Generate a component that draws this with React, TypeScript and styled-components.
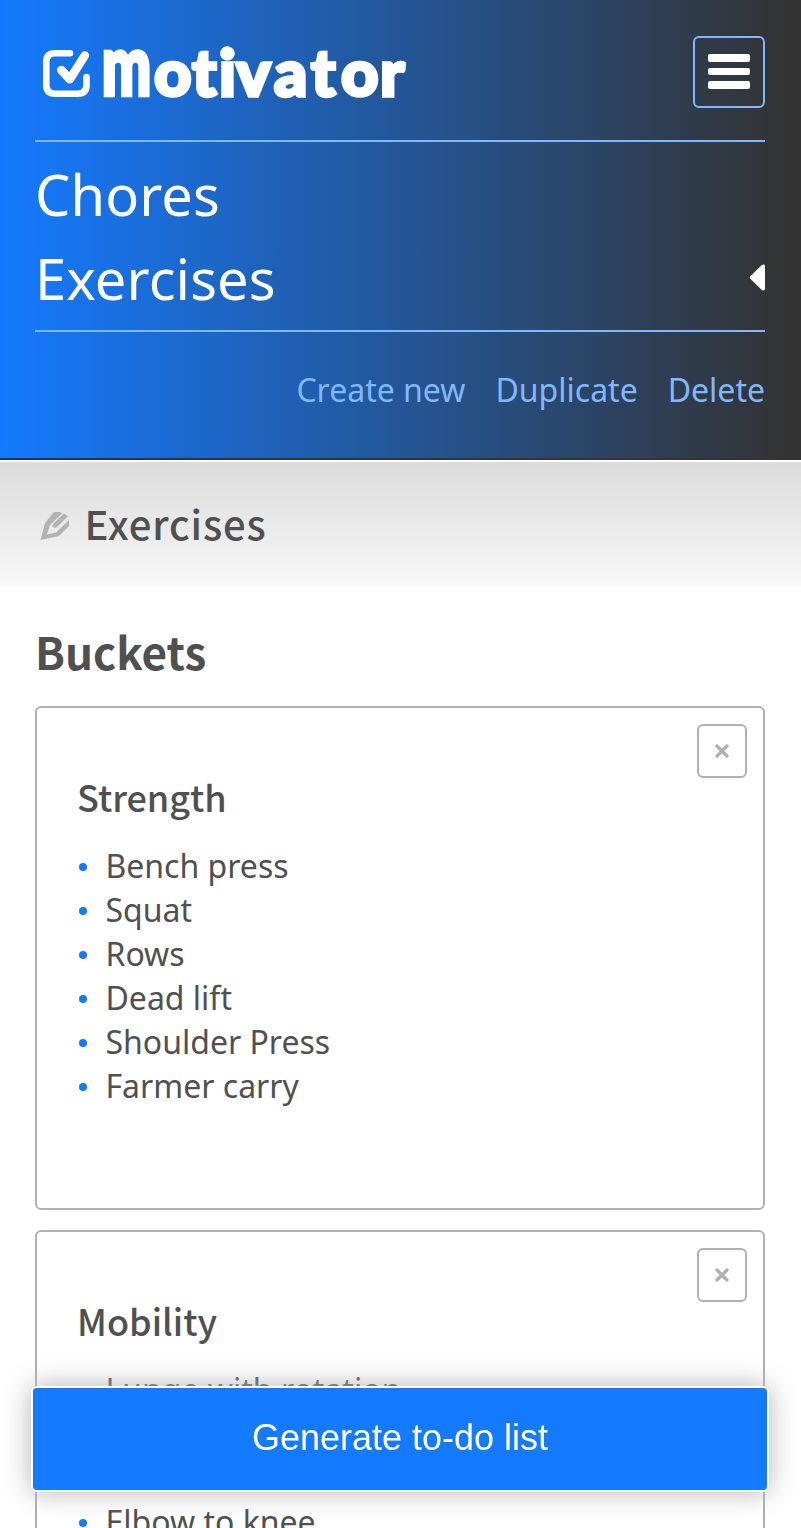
import React from "react";
import styled, { createGlobalStyle } from "styled-components";

const Global = createGlobalStyle`
  * { box-sizing: border-box; }
  html, body { margin: 0; background: #fff; }
  body { font-family: "Noto Sans", sans-serif; color: #505050; }
  h1, h2, h3, ul { margin: 0; padding: 0; }
`;

const Page = styled.div`
  height: 100vh;
  overflow: hidden;
`;

const Header = styled.header`
  height: 460px;
  padding: 36px 36px 0 35px;
  border-bottom: 2px solid #333;
  background: linear-gradient(90deg, #147aff 0%, #333 98%);
`;

const TopBar = styled.div`
  display: flex;
  justify-content: space-between;
  height: 104px;
`;

const Logo = styled.svg`
  display: block;
  width: 380px;
  height: 72px;
  fill: #fff;
  stroke: #fff;
  font-family: Lato, sans-serif;
  font-weight: 900;
`;

const MenuButton = styled.button`
  display: flex;
  flex-direction: column;
  align-items: center;
  justify-content: center;
  gap: 6px;
  width: 72px;
  height: 72px;
  padding: 0 0 1px;
  border: 2px solid #80b7ff;
  border-radius: 6px;
  background: transparent;
`;

const Bar = styled.span`
  width: 42px;
  height: 7.6px;
  border-radius: 2px;
  background: #fff;
`;

const Lists = styled.nav`
  height: 192px;
  padding: 10px 0 8px;
  border: solid #80b7ff;
  border-width: 2px 0;
`;

const ListLink = styled.a`
  display: flex;
  align-items: center;
  justify-content: space-between;
  height: 84px;
  font-size: 56px;
  line-height: 84px;
  letter-spacing: 0.1px;
  color: #fff;
`;

const Arrow = styled.svg`
  width: 16px;
  height: 29px;
  margin-top: -2px;
  fill: #fff;
`;

const Actions = styled.div`
  display: flex;
  justify-content: flex-end;
  gap: 30px;
  padding-top: 36px;
  font-size: 32px;
  line-height: 44px;
  color: #80b7ff;
`;

const TitleBar = styled.div`
  display: flex;
  align-items: center;
  height: 124px;
  margin-top: 2px;
  padding-left: 40px;
  background: linear-gradient(#dcdcdc, #f7f7f7);
`;

const Pencil = styled.svg`
  width: 30px;
  height: 30px;
  margin-right: 14.5px;
  margin-top: 4px;
  fill: #b3b3b3;
`;

const Title = styled.h1`
  margin-top: -2px;
  font: 500 40px/60px "Noto Sans CJK SC", sans-serif;
  letter-spacing: 0.85px;
`;

const Main = styled.main`
  padding: 35px 36px 0 35px;
`;

const SectionTitle = styled.h2`
  margin-bottom: 25px;
  font: 700 44px/60px "Noto Sans CJK SC", sans-serif;
`;

const Card = styled.section`
  display: flex;
  flex-direction: column;
  height: 504px;
  margin-bottom: 20px;
  padding: 16px 16px 0 40px;
  border: 2px solid #b0b0b0;
  border-radius: 6px;
`;

const Close = styled.button`
  display: flex;
  align-items: center;
  justify-content: center;
  align-self: flex-end;
  width: 50px;
  height: 54px;
  padding: 0 1px 1px 0;
  border: 2px solid #b0b0b0;
  border-radius: 6px;
  background: #fff;
`;

const Cross = styled.svg`
  width: 14px;
  height: 14px;
  stroke: #b0b0b0;
  stroke-width: 3.2;
  stroke-linecap: round;
`;

const CardTitle = styled.h3`
  margin-bottom: 30px;
  font: 500 36px/36px "Noto Sans CJK SC", sans-serif;
`;

const Items = styled.ul`
  list-style: none;
`;

const Item = styled.li`
  display: flex;
  align-items: center;
  font-size: 32px;
  line-height: 44px;

  &::before {
    content: "";
    width: 8px;
    height: 8px;
    margin: 1px 18.5px 0 2px;
    border-radius: 50%;
    background: #147aff;
  }
`;

const Generate = styled.button`
  position: fixed;
  left: 31px;
  top: 1386px;
  width: 738px;
  height: 106px;
  padding: 0 0 2px;
  border: 2px solid #fff;
  border-radius: 6px;
  background: #147aff;
  box-shadow: 0 0 28px rgba(0, 0, 0, 0.3), 0 0 24px rgba(255, 255, 255, 0.8);
  font: 36px "Liberation Sans", sans-serif;
  color: #fff;
`;

const buckets = [
  { name: "Strength", items: ["Bench press", "Squat", "Rows", "Dead lift", "Shoulder Press", "Farmer carry"] },
  { name: "Mobility", items: ["Lunge with rotation", "Hip circles", "Cat cow", "Elbow to knee"] },
];

export default function App() {
  return (
    <Page>
      <Global />
      <Header>
        <TopBar>
          <Logo viewBox="35 36 380 72" role="img" aria-label="Motivator">
            <path d="M70 53.3H55Q46.3 53.3 46.3 62V85Q46.3 93.7 55 93.7H78Q86.5 93.7 86.5 85V77" fill="none" strokeWidth="6.6" strokeLinecap="round" />
            <path d="M61.3 70L69.8 79.3L84.8 55.5" fill="none" strokeWidth="8.6" strokeLinecap="round" strokeLinejoin="round" />
            <text x="102" y="95" fontSize="83" textLength="49" lengthAdjust="spacingAndGlyphs" strokeWidth="4.5">m</text>
            <text x="154 192 219 236 274 311 341 380" y="95.5" fontSize="65" strokeWidth="3.4">otivator</text>
          </Logo>
          <MenuButton aria-label="Menu"><Bar /><Bar /><Bar /></MenuButton>
        </TopBar>
        <Lists>
          <ListLink>Chores</ListLink>
          <ListLink>
            Exercises
            <Arrow viewBox="0 0 17 30">
              <path d="M1.4 13.6L13.6 1.7Q17 0 17 3V27Q17 30 13.6 28.3L1.4 16.4Q0 15 1.4 13.6Z" />
            </Arrow>
          </ListLink>
        </Lists>
        <Actions><a>Create new</a><a>Duplicate</a><a>Delete</a></Actions>
      </Header>
      <TitleBar>
        <Pencil viewBox="0 0 30 30">
          <path d="M0.5 29L5 12L14 1H20L22 2.5L10 14L7 23.5L16 21.5L29 9V15L19 25ZM24 2.5L28 5L16 17L12.5 16L13 13Z" />
        </Pencil>
        <Title>Exercises</Title>
      </TitleBar>
      <Main>
        <SectionTitle>Buckets</SectionTitle>
        {buckets.map((bucket) => (
          <Card key={bucket.name}>
            <Close aria-label="Remove">
              <Cross viewBox="0 0 14 14"><path d="M2 2L12 12M12 2L2 12" /></Cross>
            </Close>
            <CardTitle>{bucket.name}</CardTitle>
            <Items>
              {bucket.items.map((item) => <Item key={item}>{item}</Item>)}
            </Items>
          </Card>
        ))}
      </Main>
      <Generate>Generate to-do list</Generate>
    </Page>
  );
}
